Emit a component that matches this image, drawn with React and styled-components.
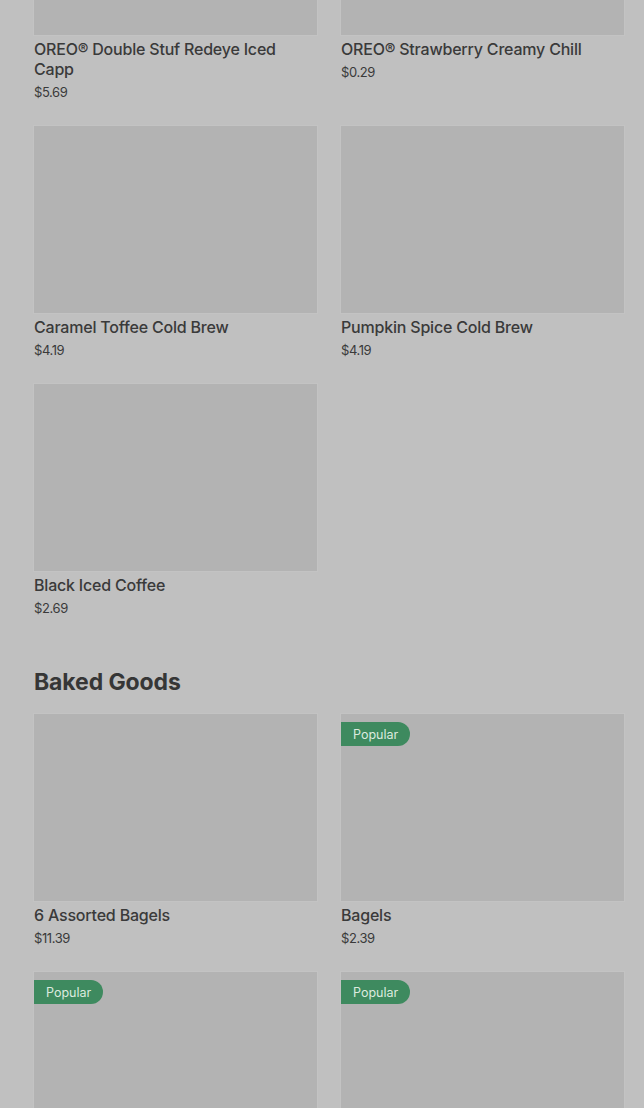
import React from 'react'
import styled, { createGlobalStyle } from 'styled-components'

const Global = createGlobalStyle`
  html, body {
    margin: 0;
    background: #c0c0c0;
    overflow: hidden;
  }
  body {
    font-family: Inter, "Noto Sans", sans-serif;
    color: #3a3a3a;
  }
`

const Page = styled.div`
  padding: 0 20px 0 34px;
  margin-top: -152px;
  height: 1260px;
  overflow: hidden;
`

const Section = styled.section`
  margin-bottom: 51px;
`

const Heading = styled.h2`
  margin: 0 0 18px;
  font-size: 23px;
  line-height: 28px;
  font-weight: 700;
  letter-spacing: -0.1px;
  color: #363636;
`

const Grid = styled.div`
  display: grid;
  grid-template-columns: 1fr 1fr;
  column-gap: 24px;
  row-gap: 25px;
`

const Card = styled.div`
  display: flex;
  flex-direction: column;
`

const Thumb = styled.div`
  position: relative;
  height: 187px;
  background: #b3b3b3;
  box-shadow: 0 0 0 1px rgba(255, 255, 255, 0.06);
`

const Badge = styled.span`
  position: absolute;
  top: 8px;
  left: 0;
  height: 24px;
  padding: 0 12px;
  display: flex;
  align-items: center;
  font-size: 12.5px;
  color: #dceadf;
  background: #3e8a5f;
  border-radius: 0 12px 12px 0;
`

const Title = styled.div`
  margin-top: 4px;
  font-size: 16px;
  line-height: 20px;
  font-weight: 500;
  letter-spacing: -0.2px;
  color: #3a3a3a;
`

const Price = styled.div`
  margin-top: 4px;
  font-size: 13px;
  line-height: 18px;
  letter-spacing: -0.4px;
  color: #3a3a3a;
`

const drinks = [
  { name: 'OREO® Double Stuf Redeye Iced Capp', price: '$5.69' },
  { name: 'OREO® Strawberry Creamy Chill', price: '$0.29' },
  { name: 'Caramel Toffee Cold Brew', price: '$4.19' },
  { name: 'Pumpkin Spice Cold Brew', price: '$4.19' },
  { name: 'Black Iced Coffee', price: '$2.69' },
]

const baked = [
  { name: '6 Assorted Bagels', price: '$11.39' },
  { name: 'Bagels', price: '$2.39', popular: true },
  { name: 'Muffin', price: '$2.19', popular: true },
  { name: 'Donut', price: '$1.89', popular: true },
]

const Item = ({ item }) => (
  <Card>
    <Thumb>{item.popular && <Badge>Popular</Badge>}</Thumb>
    <Title>{item.name}</Title>
    <Price>{item.price}</Price>
  </Card>
)

const App = () => {
  return (
    <>
      <Global />
      <Page>
        <Section>
          <Grid>
            {drinks.map((d) => <Item key={d.name} item={d} />)}
          </Grid>
        </Section>
        <Section>
          <Heading>Baked Goods</Heading>
          <Grid>
            {baked.map((d) => <Item key={d.name} item={d} />)}
          </Grid>
        </Section>
      </Page>
    </>
  )
}

export default App
